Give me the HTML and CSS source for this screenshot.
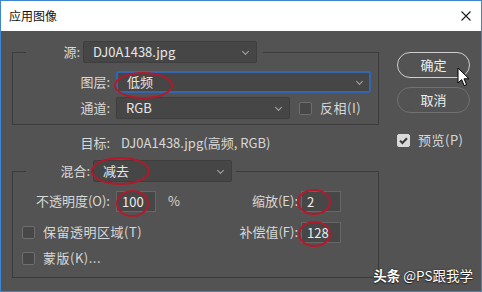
FILE: index.html
```html
<!DOCTYPE html>
<html lang="zh">
<head>
<meta charset="utf-8">
<title>应用图像</title>
<link rel="stylesheet" href="styles.css">
</head>
<body>
<div class="win">
  <div class="titlebar">
    <span class="title">应用图像</span>
    <svg class="close" width="10" height="10" viewBox="0 0 10 10"><path d="M0.5 0.5 L9.5 9.5 M9.5 0.5 L0.5 9.5" stroke="#1a1a1a" stroke-width="1.1" fill="none"/></svg>
  </div>
  <div class="body">
    <div class="main">
      <fieldset class="grp grp1">
        <legend class="lg lg1">
          <span class="lgl lgl1">源:</span>
          <div class="sel s-src">DJ0A1438.jpg<span class="chev"></span></div>
        </legend>
        <div class="row">
          <span class="lbl">图层:</span>
          <div class="sel s-layer focus">低频<span class="chev"></span></div>
        </div>
        <div class="row">
          <span class="lbl">通道:</span>
          <div class="sel s-chan">RGB<span class="chev"></span></div>
          <span class="cb cb-inv"></span>
          <span class="cbl">反相(I)</span>
        </div>
      </fieldset>

      <div class="target">
        <span class="tlbl">目标:</span>
        <span class="tval">DJ0A1438.jpg(高频, RGB)</span>
      </div>

      <fieldset class="grp grp2">
        <legend class="lg lg2">
          <span class="lgl lgl2">混合:</span>
          <div class="sel s-blend">减去<span class="chev"></span></div>
        </legend>
        <div class="row2">
          <div class="left">
            <span class="lbl">不透明度(O):</span>
            <div class="inp">100</div>
            <span class="pct">%</span>
          </div>
          <div class="right">
            <span class="rl">缩放(E):</span>
            <div class="inp">2</div>
          </div>
        </div>
        <div class="row2 r2b">
          <div class="left chk">
            <span class="cb"></span>
            <span class="cbl">保留透明区域(T)</span>
          </div>
          <div class="right">
            <span class="rl">补偿值(F):</span>
            <div class="inp">128</div>
          </div>
        </div>
        <div class="row2 r2c">
          <div class="left chk">
            <span class="cb"></span>
            <span class="cbl">蒙版(K)...</span>
          </div>
        </div>
      </fieldset>
    </div>

    <div class="side">
      <div class="btn btn-ok">确定</div>
      <div class="btn btn-cancel">取消</div>
      <div class="preview">
        <span class="cb on"><svg width="13" height="13" viewBox="0 0 13 13"><path d="M3 6.6 L5.4 9 L10 4.2" stroke="#3a3a3a" stroke-width="2" fill="none"/></svg></span>
        <span class="cbl">预览(P)</span>
      </div>
    </div>
  </div>

  <span class="ring ring-layer"></span>
  <span class="ring ring-blend"></span>
  <span class="ring ring-op"></span>
  <span class="ring ring-scale"></span>
  <span class="ring ring-off"></span>

  <svg class="cursor" width="14" height="20" viewBox="0 0 14 20"><path d="M1 1 L1 16 L4.6 12.6 L7.2 18.6 L9.6 17.6 L7 11.8 L12 11.8 Z" fill="#ffffff" stroke="#000" stroke-width="1"/></svg>

  <div class="wm"><b>头条</b> @PS跟我学</div>
</div>
</body>
</html>
```

FILE: styles.css
```css
* { box-sizing: border-box; }
html, body { margin: 0; padding: 0; }
body {
  width: 482px;
  height: 292px;
  overflow: hidden;
  font-family: "Noto Sans CJK SC", "Noto Sans", sans-serif;
  font-size: 13px;
  color: #d8d8d8;
}
.win {
  position: relative;
  width: 482px;
  height: 292px;
  border: 1px solid #3f86d0;
  background: #535353;
  display: flex;
  flex-direction: column;
}
.titlebar {
  height: 30px;
  background: #ffffff;
  display: flex;
  align-items: center;
  justify-content: space-between;
  padding: 0 10px 0 8px;
  flex: none;
}
.title {
  font-size: 12px;
  color: #111;
  line-height: 14px;
  margin-top: -1px;
}
.close { margin-top: -1px; }

.body {
  flex: 1;
  display: flex;
  align-items: flex-start;
  padding: 10px 0 0 11px;
}
.main { width: 367px; flex: none; }

.grp {
  margin: 0;
  width: 367px;
  border: 1px solid #3b3b3b;
  min-inline-size: 0;
}
.grp1 { padding: 8px 0 5px 0; }
.grp2 { padding: 8px 0 11px 0; margin-top: 9px; }

.lg {
  display: flex;
  align-items: center;
  padding: 0;
  margin-left: 13px;
  height: 22px;
}
.lg1 { padding-right: 6px; }
.lg2 { padding-right: 4px; }
.lgl { text-align: right; line-height: 16px; }
.lgl1 { width: 54px; margin-right: 3px; }
.lgl2 { width: 64px; margin-right: 3px; }

.sel {
  position: relative;
  height: 22px;
  background: #464646;
  border: 1px solid #3e3e3e;
  border-radius: 2px;
  color: #e6e6e6;
  line-height: 20px;
  padding-left: 9px;
}
.sel.focus {
  border: 2px solid #3565aa;
  line-height: 18px;
  padding-left: 9px;
}
.chev {
  position: absolute;
  right: 8px;
  top: 7px;
  width: 5px;
  height: 5px;
  border-right: 1px solid #a8a8a8;
  border-bottom: 1px solid #a8a8a8;
  transform: rotate(45deg);
}
.focus .chev { right: 7px; top: 6px; }
.s-src { width: 174px; }
.s-layer { width: 255px; }
.s-chan { width: 174px; }
.s-blend { width: 139px; }

.row {
  display: flex;
  align-items: center;
  height: 22px;
}
.row + .row { margin-top: 4px; }
.lbl {
  width: 97px;
  text-align: right;
  margin-right: 6px;
  line-height: 16px;
}
.cb {
  width: 13px;
  height: 13px;
  border: 1px solid #6e6e6e;
  background: #474747;
  border-radius: 2px;
  flex: none;
  display: block;
}
.cb.on {
  background: #dadada;
  border-color: #dadada;
}
.cb.on svg { display: block; margin: -1px; }
.cb-inv { margin-left: 9px; }
.cbl { margin-left: 8px; line-height: 16px; letter-spacing: 0.5px; }

.target {
  display: flex;
  align-items: center;
  height: 16px;
  margin-top: 10px;
  line-height: 16px;
}
.tlbl { width: 98px; text-align: right; }
.tval { margin-left: 11px; color: #d8d8d8; }

.row2 {
  display: flex;
  align-items: center;
  height: 22px;
  padding-right: 37px;
}
.r2b { margin-top: 9px; }
.r2c { margin-top: 7px; height: 16px; }
.left { display: flex; align-items: center; }
.left.chk { padding-left: 9px; }
.right { margin-left: auto; display: flex; align-items: center; }
.rl { line-height: 16px; margin-right: 3px; }
.inp {
  width: 40px;
  height: 21px;
  background: #474747;
  border: 1px solid #676767;
  color: #ececec;
  line-height: 19px;
  padding-left: 5px;
}
.pct { margin-left: 12px; line-height: 16px; }

.side {
  margin-left: 18px;
  margin-top: 11px;
  width: 73px;
  display: flex;
  flex-direction: column;
}
.btn {
  height: 26px;
  border-radius: 13px;
  text-align: center;
  line-height: 24px;
  color: #ededed;
}
.btn-ok { border: 1.5px solid #cfcfcf; line-height: 23px; }
.btn-cancel { border: 1.5px solid #707070; margin-top: 9px; line-height: 23px; }
.preview {
  display: flex;
  align-items: center;
  margin-top: 19px;
}

.ring {
  position: absolute;
  border: 2.5px solid #b3192b;
  border-radius: 50%;
}
.ring-layer { left: 113px; top: 71px; width: 59px; height: 27px; }
.ring-blend { left: 90px; top: 156px; width: 59px; height: 28px; }
.ring-op { left: 115px; top: 189px; width: 33px; height: 27px; }
.ring-scale { left: 296px; top: 188px; width: 34px; height: 26px; }
.ring-off { left: 297px; top: 220px; width: 33px; height: 26px; }

.cursor { position: absolute; left: 456px; top: 66px; }

.wm {
  position: absolute;
  right: 8px;
  bottom: 8px;
  font-size: 13.5px;
  line-height: 16px;
  color: #ffffff;
  text-shadow: 0 0 2px rgba(0,0,0,0.7), 0 1px 1px rgba(0,0,0,0.5);
  white-space: nowrap;
}
.wm b { font-weight: 700; }
```
